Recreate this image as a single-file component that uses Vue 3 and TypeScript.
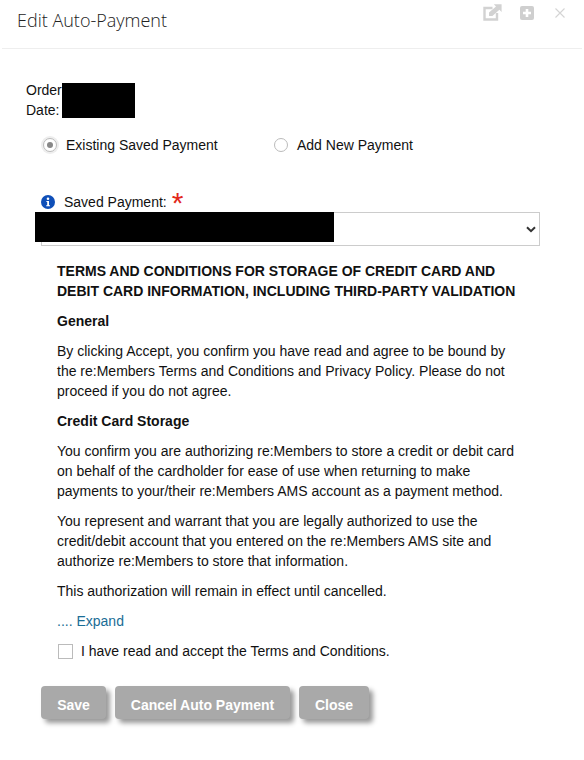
<script setup lang="ts">
const paragraphs1 = [
  'You confirm you are authorizing re:Members to store a credit or debit card on behalf of the cardholder for ease of use when returning to make payments to your/their re:Members AMS account as a payment method.',
  'You represent and warrant that you are legally authorized to use the credit/debit account that you entered on the re:Members AMS site and authorize re:Members to store that information.',
  'This authorization will remain in effect until cancelled.',
]
</script>

<template>
  <div class="modal">
    <header class="head">
      <h1 class="title">Edit Auto-Payment</h1>
      <div class="tools">
        <svg class="ext" width="19" height="17" viewBox="0 0 19 17" aria-hidden="true">
          <path d="M14 9V15.5H1.5V4H9.5" fill="none" stroke="#d2d2d2" stroke-width="2.4" />
          <path d="M6 12L6 8.6L13 2.4L10.8 0.2H18.6V8L16.4 5.8L9.4 12Z" fill="#d2d2d2" />
        </svg>
        <svg class="plus" width="14" height="14" viewBox="0 0 14 14" aria-hidden="true">
          <rect width="14" height="14" rx="2" fill="#cfcfcf" />
          <path d="M7 3V11M3 7H11" stroke="#fff" stroke-width="2.6" />
        </svg>
        <svg class="close" width="10" height="10" viewBox="0 0 10 10" aria-hidden="true">
          <path d="M0.5 0.5L9.5 9.5M9.5 0.5L0.5 9.5" stroke="#d4d4d4" stroke-width="1.1" />
        </svg>
      </div>
    </header>

    <div class="order">
      <div class="order-label">Order Date:</div>
      <div class="redact-order"></div>
    </div>

    <div class="radios">
      <label class="radio-item first">
        <span class="radio checked"><span class="dot"></span></span>
        <span>Existing Saved Payment</span>
      </label>
      <label class="radio-item">
        <span class="radio"></span>
        <span>Add New Payment</span>
      </label>
    </div>

    <div class="saved-label">
      <svg width="14" height="14" viewBox="0 0 14 14" aria-hidden="true">
        <circle cx="7" cy="7" r="7" fill="#0f4fb8" />
        <circle cx="7" cy="3.8" r="1.3" fill="#fff" />
        <path d="M5.4 6H8V10.2H9V11.2H5.2V10.2H6.2V7H5.4Z" fill="#fff" />
      </svg>
      <span class="saved-text">Saved Payment:</span>
      <span class="star">*</span>
    </div>

    <div class="select-wrap">
      <div class="select">
        <svg width="10" height="7" viewBox="0 0 10 7" aria-hidden="true">
          <path d="M1 1.2L5 5.2L9 1.2" fill="none" stroke="#333" stroke-width="2" />
        </svg>
      </div>
      <div class="redact-select"></div>
    </div>

    <section class="terms">
      <h2 class="main-h">TERMS AND CONDITIONS FOR STORAGE OF CREDIT CARD AND DEBIT CARD INFORMATION, INCLUDING THIRD-PARTY VALIDATION</h2>
      <h3>General</h3>
      <p>By clicking Accept, you confirm you have read and agree to be bound by the re:Members Terms and Conditions and Privacy Policy. Please do not proceed if you do not agree.</p>
      <h3>Credit Card Storage</h3>
      <p v-for="(text, i) in paragraphs1" :key="i">{{ text }}</p>
    </section>

    <div class="expand">.... <span class="expand-link">Expand</span></div>

    <label class="accept">
      <span class="box"></span>
      <span>I have read and accept the Terms and Conditions.</span>
    </label>

    <div class="actions">
      <button class="btn save" type="button">Save</button>
      <button class="btn cancel" type="button">Cancel Auto Payment</button>
      <button class="btn shut" type="button">Close</button>
    </div>
  </div>
</template>

<style>
html, body { margin: 0; background: #fff; }
</style>

<style scoped>
.modal {
  width: 584px;
  height: 760px;
  box-sizing: border-box;
  overflow: hidden;
  background: #fff;
  font-family: "Liberation Sans", Arial, sans-serif;
  font-size: 14px;
  line-height: 20px;
  color: #111;
}
.head {
  height: 48px;
  margin: 0 2px;
  border-bottom: 1px solid #eeeeee;
  display: flex;
  justify-content: space-between;
  align-items: flex-start;
}
.title {
  margin: 6px 0 0 15px;
  font-family: "Open Sans", sans-serif;
  font-size: 18px;
  font-weight: 300;
  line-height: 28px;
  color: #222;
}
.tools {
  display: flex;
  align-items: center;
  margin: 4px 17px 0 0;
}
.ext { margin-right: 18px; }
.plus { margin-right: 21px; }
.order {
  display: flex;
  margin: 34px 0 0 26px;
}
.order-label { width: 36px; margin-top: -3px; }
.redact-order {
  width: 73px;
  height: 35px;
  background: #000;
}
.radios {
  display: flex;
  margin: 7px 0 0 43px;
}
.radio-item {
  display: flex;
  align-items: center;
  height: 36px;
  gap: 9px;
}
.radio-item.first { width: 231px; }
.radio {
  width: 14px;
  height: 14px;
  box-sizing: border-box;
  border: 1px solid #bbb;
  border-radius: 50%;
  display: flex;
  align-items: center;
  justify-content: center;
  background: #fff;
}
.radio.checked { box-shadow: 0 0 0 2px #eee; }
.dot {
  width: 6px;
  height: 6px;
  border-radius: 50%;
  background: #888;
}
.saved-label {
  display: flex;
  align-items: center;
  height: 20px;
  margin: 29px 0 0 41px;
}
.saved-text { margin-left: 9px; }
.star {
  margin-left: 5px;
  color: #e2281b;
  font-size: 30px;
  line-height: 20px;
  height: 20px;
  transform: translateY(1px);
}
.select-wrap {
  position: relative;
  margin: 0 44px 0 41px;
}
.select {
  height: 34px;
  box-sizing: border-box;
  border: 1px solid #ccc;
  display: flex;
  align-items: center;
  justify-content: flex-end;
  padding-right: 3px;
}
.redact-select {
  position: absolute;
  left: -6px;
  top: 0;
  width: 299px;
  height: 30px;
  background: #000;
}
.terms { margin: 15px 60px 0 57px; }
.terms h2, .terms h3 {
  margin: 0;
  font-size: 14px;
  line-height: 20px;
  font-weight: 700;
}
.terms .main-h { margin-bottom: 10px; width: 470px; }
.terms h3 { margin-bottom: 10px; }
.terms p { margin: 0 0 10px; }
.expand {
  margin: 9px 0 0 57px;
  color: #1a6d96;
}
.expand-link { color: #1a6d96; }
.accept {
  display: flex;
  align-items: center;
  margin: 10px 0 0 58px;
  gap: 8px;
}
.box {
  width: 15px;
  height: 15px;
  box-sizing: border-box;
  border: 1px solid #bbb;
  background: #fff;
}
.actions {
  display: flex;
  gap: 9px;
  margin: 25px 0 0 41px;
}
.btn {
  height: 33px;
  padding: 5px 0 0;
  border: 0;
  border-radius: 4px;
  background: #a9a9a9;
  color: #fff;
  font-family: "Liberation Sans", Arial, sans-serif;
  font-size: 14px;
  font-weight: 700;
  box-shadow: 4px 4px 5px #999;
}
.save { width: 65px; }
.cancel { width: 175px; }
.shut { width: 70px; }
</style>
